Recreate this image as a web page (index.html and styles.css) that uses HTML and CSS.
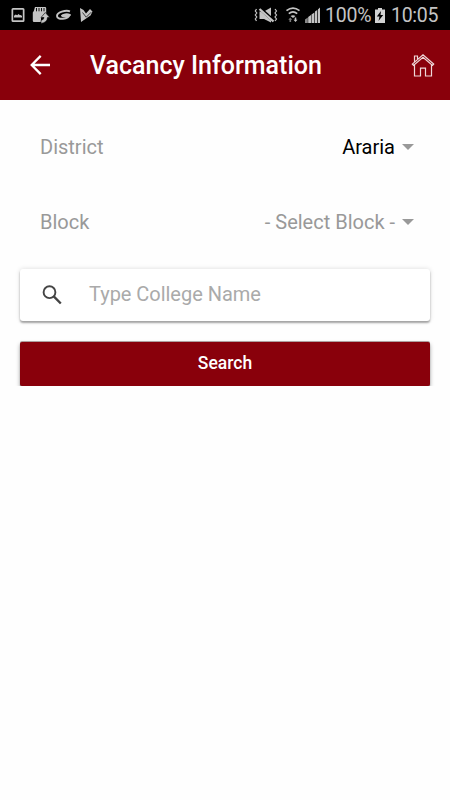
FILE: index.html
```html
<!DOCTYPE html>
<html lang="en">
<head>
<meta charset="utf-8">
<title>Vacancy Information</title>
<link rel="stylesheet" href="styles.css">
</head>
<body>
<div class="status">
  <svg class="status-left" width="96" height="30" viewBox="0 0 96 30" fill="#c4c4c4">
    <path fill-rule="evenodd" d="M13 8h10q1.500 0 1.500 1.500v11q0 1.500-1.500 1.500H13q-1.500 0-1.500-1.500v-11Q11.500 8 13 8zm.2 1.800v10.400h9.600V9.800z"/>
    <path d="M14 17.500v-1.700l1.700-1.300 1.500.7 1.300-1.200 1.500 1.200.8-.3 1.200 1.200v1.400z"/>
    <path d="M35 7h10q1.200 0 1.200 1.200V14L41 18v4h-7q-1.200 0-1.200-1.200v-8.300l1-1.500z"/>
    <path stroke="#000" stroke-width=".9" d="M36.500 8v3.300m2.500-3.300v3.300M41.500 8v3.300m2.500-3.300v3.300"/>
    <path stroke="#000" stroke-width=".6" d="M45.300 12.500l4.500 5h-2.300q-.2 5-6.500 5.900v-3q3-.8 3-2.900h-3z"/>
    <path fill="none" stroke="#c4c4c4" stroke-width="1.900" d="M70 11.300c-4.500-1.500-13 1-13 4.600 0 4.500 11.500 3.500 12.700-1.100-2.500-1-7.200-.3-7.700.9.800 1.100 5 .6 8.500-.9"/>
    <path d="M80 8l3.500 2 2.500 3.500 4-4.500 2.500 2.500-2 4L81 22z"/>
    <path fill="none" stroke="#000" stroke-width=".7" d="M82.500 12.500l3.700 4.700 5-5"/>
  </svg>
  <div class="status-right">
    <svg class="signals" width="68" height="30" viewBox="254 0 68 30" fill="#c4c4c4">
      <path d="M259.500 11.500h4.500l7-4v15L264 19h-4.500z"/>
      <path stroke="#000" stroke-width="3.400" d="M259.500 8l14.500 13"/>
      <path stroke="#c4c4c4" stroke-width="2.300" d="M259.500 9l14 12.500"/>
      <path fill="none" stroke="#c4c4c4" stroke-width="1.200" d="M256.500 9l-1.200 2 1.500 2-1.500 2 1.500 2-1.500 2 1.200 2M275 9l1.500 2-1.500 2 1.500 2-1.500 2 1.500 2-1.500 2"/>
      <path fill="none" stroke="#c4c4c4" stroke-width="1.700" d="M286.500 10.700q6.500-5.200 13 0M288.800 13.700q4.200-3.600 8.400 0"/>
      <path d="M290.500 16q2.500-1.600 5 0L293 18z"/>
      <path fill="#777" d="M290.300 17.500l2 2.200h-1.200V22h-1.600v-2.300h-1.200z"/>
      <path d="M295.500 22l-2-2.200h1.200V17.500h1.600v2.300h1.200z"/>
      <path fill="#888" d="M305 19.500l2.800-2V23H305z"/>
      <path d="M308.200 17l2.800-2v8h-2.800zM311.500 14.500l2.900-2V23h-2.900zM315 11.500l2.200-1.500v13H315zM317.900 9.500L320 7.500V23h-2.100z"/>
    </svg>
    <span class="percent">100%</span>
    <svg class="battery" width="10" height="15" viewBox="0 0 10 15">
      <path fill="#d2d2d2" d="M3 0h4v1.500h3V15H0V1.500h3z"/>
      <path fill="#000" d="M6 3L1.800 8.500h2.700L3.500 13l4.700-6H5.500z"/>
    </svg>
    <span class="clock">10:05</span>
  </div>
</div>
<header class="bar">
  <svg class="back" width="20" height="20" viewBox="0 0 20 20" fill="none" stroke="#fff" stroke-width="2.300"><path d="M10.700 .9L1.700 10l9 9.100M1.700 10H20"/></svg>
  <h1 class="title">Vacancy Information</h1>
  <svg class="home" width="24" height="24" viewBox="0 0 24 24" fill="none" stroke="#efd8da" stroke-width="1.200">
    <path d="M1.300 11.100L12 1.700l10.700 9.400-1.200 1.300L12 4.200l-9.500 8.200zM3.500 12v11h6v-7.800h5V23h6V12M3.500 8.800V3h3v3"/>
  </svg>
</header>
<main class="form">
  <div class="row"><span class="label">District</span><span class="value">Araria</span><i class="caret"></i></div>
  <div class="row"><span class="label">Block</span><span class="value empty">- Select Block -</span><i class="caret"></i></div>
  <div class="search">
    <svg class="glass" width="20" height="20" viewBox="0 0 20 20" fill="none" stroke="#444"><circle cx="7.500" cy="7.200" r="5.900" stroke-width="1.900"/><path stroke-width="2.400" d="M11.500 11.200l7.300 7.300"/></svg>
    <span class="hint">Type College Name</span>
  </div>
  <div class="button">Search</div>
</main>
</body>
</html>
```
FILE: styles.css
```css
body {
  margin: 0;
  background: #fefefe;
  font-family: Roboto, "Liberation Sans", sans-serif;
  font-size: 20px;
}
svg { display: block; flex: none; }
.status {
  display: flex;
  justify-content: space-between;
  height: 30px;
  background: #000;
  color: #c4c4c4;
}
.status-right {
  display: flex;
  align-items: center;
  width: 196px;
  line-height: 30px;
}
.percent,
.clock {
  flex: none;
  padding-top: 2px;
  font-size: 19.500px;
  white-space: nowrap;
}
.percent { width: 49px; margin-left: 3px; letter-spacing: -.2px; }
.battery { margin-left: 1px; }
.clock { margin-left: 6px; letter-spacing: -.3px; }
.bar {
  display: flex;
  align-items: center;
  box-sizing: border-box;
  height: 70px;
  padding: 0 15px 0 30px;
  background: #89000b;
  color: #fff;
}
.title {
  flex: 1;
  margin: 2px 0 0 40px;
  font-size: 25px;
  font-weight: 500;
  line-height: 68px;
}
.form { padding: 9px 20px 0; }
.row {
  display: flex;
  align-items: center;
  height: 75px;
  padding: 0 16px 0 20px;
}
.label { flex: 1; color: #999; }
.value { color: #000; }
.empty { color: #999; }
.caret {
  margin-left: 7px;
  border: 6px solid transparent;
  border-top-color: #999;
  border-bottom: 0;
}
.search {
  display: flex;
  align-items: center;
  height: 52px;
  margin-top: 10px;
  border-radius: 3px;
  background: #fff;
  box-shadow: 0 2px 2px rgba(0, 0, 0, .32), 0 0 5px rgba(0, 0, 0, .14);
}
.glass { margin: 0 27px 0 22px; }
.hint { padding-bottom: 2px; color: #aaa; letter-spacing: -.03px; }
.button {
  height: 44px;
  margin-top: 21px;
  border-radius: 2px;
  background: #89000b;
  box-shadow: 0 -1px 0 rgba(90, 60, 60, .45), 0 1px 1px rgba(0, 0, 0, .4), 0 2px 4px rgba(0, 0, 0, .35);
  color: #fff;
  font-size: 17.500px;
  font-weight: 500;
  line-height: 42px;
  text-align: center;
}
```
